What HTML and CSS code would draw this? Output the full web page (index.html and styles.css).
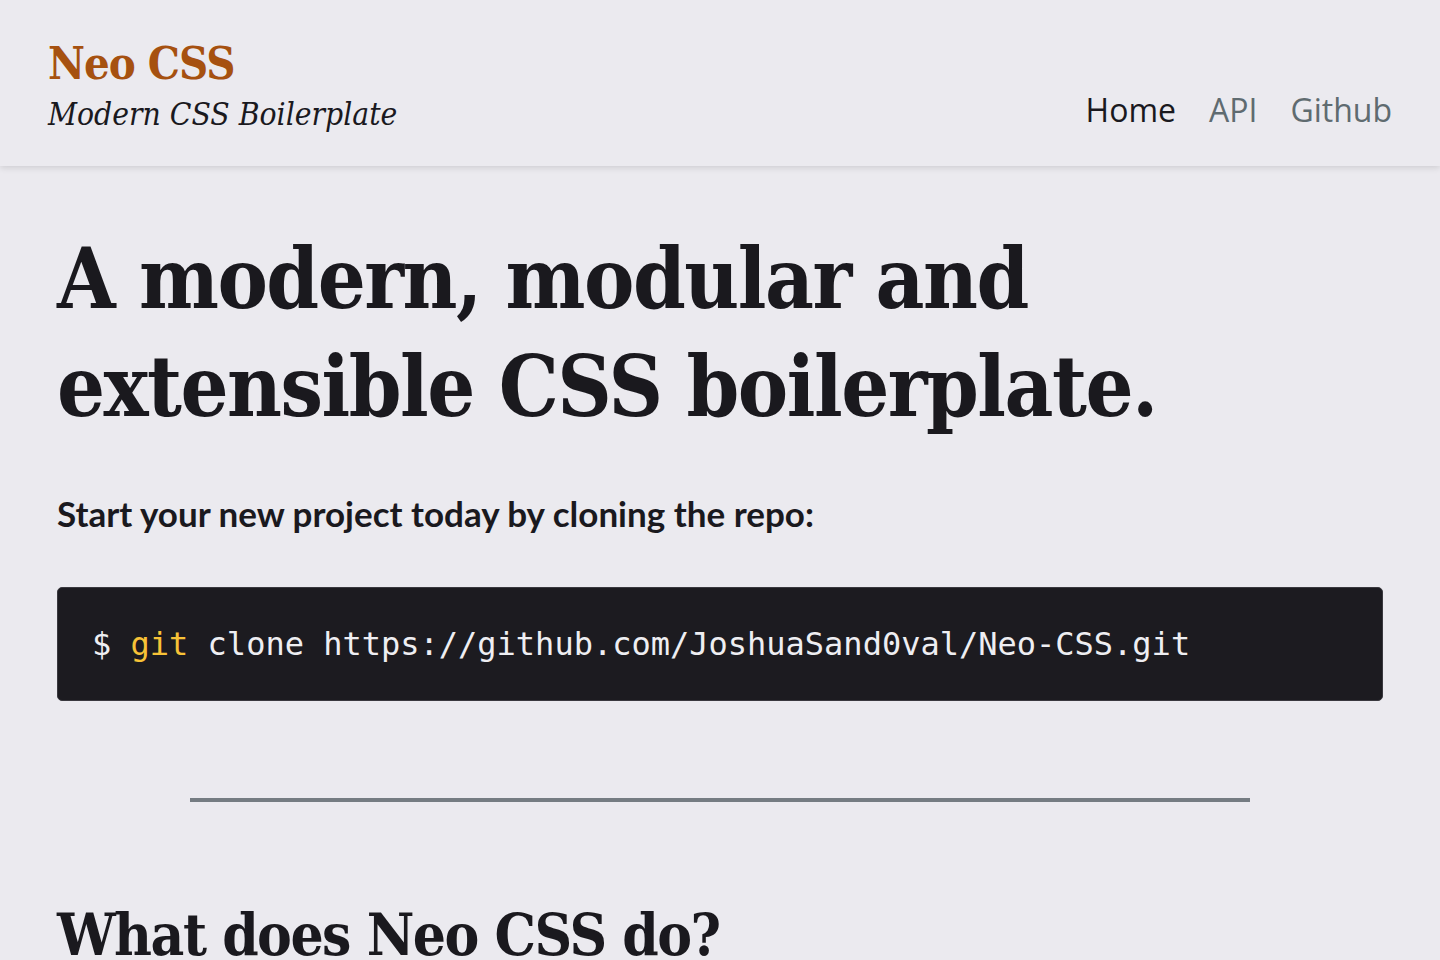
FILE: index.html
```html
<!DOCTYPE html>
<html lang="en">
<head>
<meta charset="utf-8">
<title>Neo CSS</title>
<link rel="stylesheet" href="styles.css">
</head>
<body>
<header class="site-header">
  <div class="brand">
    <a class="brand-title" href="#">Neo CSS</a>
    <div class="brand-tagline">Modern CSS Boilerplate</div>
  </div>
  <nav class="nav">
    <a class="nav-link active" href="#">Home</a>
    <a class="nav-link" href="#">API</a>
    <a class="nav-link" href="#">Github</a>
  </nav>
</header>
<main class="content">
  <h1 class="hero-title">A modern, modular and extensible CSS boilerplate.</h1>
  <p class="lead">Start your new project today by cloning the repo:</p>
  <pre class="code"><code>$ <span class="kw">git</span> clone https://github.com/JoshuaSand0val/Neo-CSS.git</code></pre>
  <hr class="divider">
  <h2 class="section-title">What does Neo CSS do?</h2>
</main>
</body>
</html>
```
FILE: styles.css
```css
* { box-sizing: border-box; }
html, body { margin: 0; padding: 0; }
body {
  background: #ebeaef;
  color: #1a191e;
  font-family: "DejaVu Serif Condensed", "DejaVu Serif", "Liberation Serif", serif;
  font-stretch: semi-condensed;
  overflow: hidden;
  height: 960px;
}
.site-header {
  display: flex;
  justify-content: space-between;
  align-items: flex-end;
  height: 166px;
  padding: 30px 48px 30px 48px;
  background: #ebeaef;
  box-shadow: 0 2px 6px rgba(0,0,0,0.12);
  position: relative;
}
.brand { display: flex; flex-direction: column; }
.brand-title {
  color: #a65110;
  text-decoration: none;
  font-weight: bold;
  font-size: 45px;
  line-height: 56px;
  letter-spacing: -1px;
}
.brand-tagline {
  font-style: italic;
  font-size: 31.5px;
  line-height: 44px;
}
.nav { display: flex; gap: 33px; padding-bottom: 4px; }
.nav-link {
  font-family: "Open Sans", "Noto Sans", sans-serif;
  font-stretch: normal;
  font-size: 32px;
  line-height: 44px;
  color: #5f6b70;
  text-decoration: none;
}
.nav-link.active { color: #1a191e; }
.content { padding: 0 57px; }
.hero-title {
  margin: 59px 0 0;
  font-size: 84px;
  line-height: 108px;
  font-weight: bold;
  letter-spacing: -1.5px;
}
.lead {
  margin: 50px 0 0;
  font-family: "Lato", "Open Sans", sans-serif;
  font-stretch: normal;
  font-weight: bold;
  font-size: 35px;
  line-height: 44px;
}
.code {
  margin: 52px 0 0;
  background: #1c1b20;
  border: 1px solid #3a393f;
  border-radius: 5px;
  padding: 30px 34px;
  color: #eeeef2;
  font-family: "DejaVu Sans Mono", "Liberation Mono", monospace;
  font-stretch: normal;
  font-size: 32px;
  line-height: 52px;
}
.code .kw { color: #f7c237; }
.divider {
  width: 80%;
  margin: 97px auto 0;
  border: 0;
  height: 4px;
  background: #757c82;
}
.section-title {
  margin: 93px 0 0;
  font-size: 58px;
  line-height: 80px;
  font-weight: bold;
  letter-spacing: -1.5px;
}
```
